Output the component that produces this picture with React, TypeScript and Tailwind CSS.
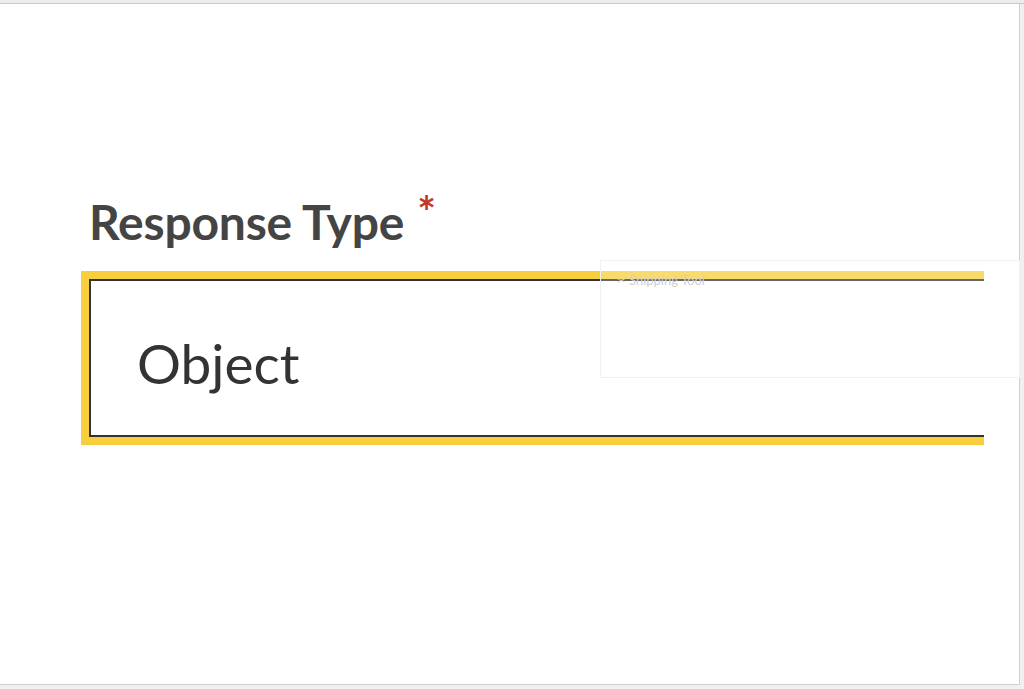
export default function App() {
  return (
    <div className="h-[689px] w-[1024px] overflow-hidden bg-[#f0f0f0] font-['Lato','Liberation_Sans',sans-serif]">
      <div className="h-[4px] border-b border-[#c9c9c9] bg-[#ececec]" />
      <div className="relative h-[681px] w-[1020px] border-r border-b border-[#cfcfcf] bg-white">
        <div className="pt-[188px] pl-[89px]">
          <div className="flex items-start text-[#444444]">
            <span className="text-[48px] leading-[60px] font-bold tracking-[-0.2px]">Response Type</span>
            <span className="ml-[13px] mt-[-3px] text-[44px] leading-[44px] font-bold text-[#c0392b]">*</span>
          </div>
        </div>
        <div className="mt-[19px] ml-[81px] w-[903px] overflow-hidden">
          <div className="w-[1100px] border-8 border-[#f7cf3c]">
            <div className="flex h-[158px] items-center border-2 border-[#333333] pt-[10px] pl-[46px]">
              <span className="text-[55px] leading-none text-[#333333]">Object</span>
            </div>
          </div>
        </div>
        <div className="absolute top-[256px] left-[600px] h-[118px] w-[420px] border border-[#f2f2f2] bg-white/25">
          <div className="flex items-center gap-1 pt-[10px] pl-[16px] text-[13px] text-[#cfcfcf]">
            <span className="text-[10px]">✂</span>
            <span>Snipping Tool</span>
          </div>
        </div>
      </div>
    </div>
  );
}
